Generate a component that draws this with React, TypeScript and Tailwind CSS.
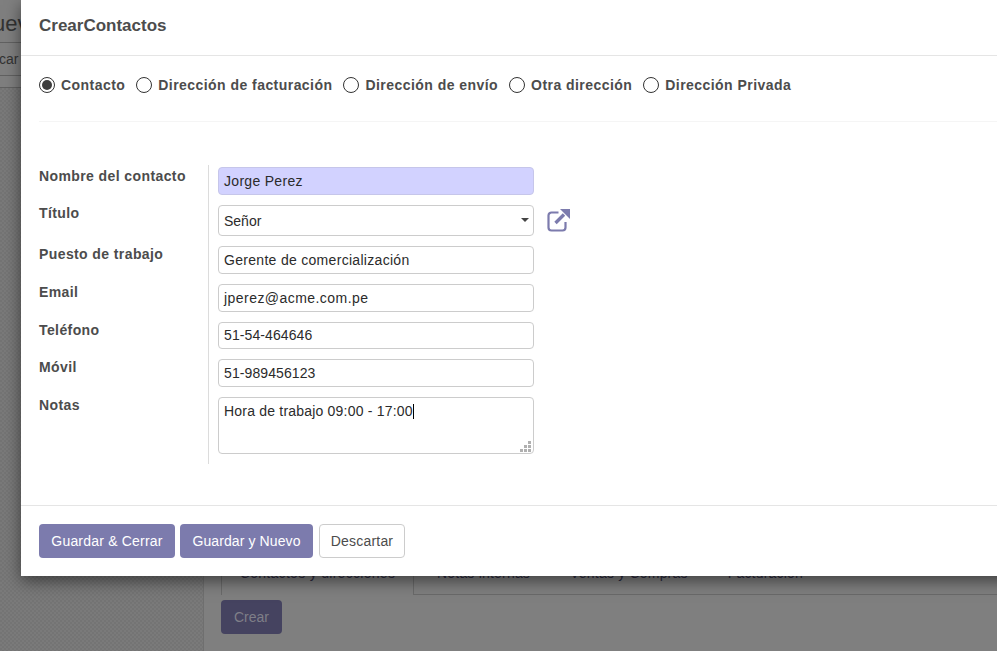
import React from "react";
import { twMerge } from "tailwind-merge";

const radios = [
  { label: "Contacto", checked: true },
  { label: "Dirección de facturación" },
  { label: "Dirección de envío" },
  { label: "Otra dirección" },
  { label: "Dirección Privada" },
];

const Radio = ({ label, checked }: { label: string; checked?: boolean }) => (
  <div className="flex items-center gap-[6px]">
    <span className="flex h-4 w-4 items-center justify-center rounded-full border border-[#333333] bg-white">
      {checked && <span className="h-[10px] w-[10px] rounded-full bg-[#3d3d3d]" />}
    </span>
    <span className="font-bold tracking-[0.45px]">{label}</span>
  </div>
);

const Row = ({ label, first, children }: { label: string; first?: boolean; children: React.ReactNode }) => (
  <div className="flex">
    <div className={`w-[169px] shrink-0 font-bold leading-[14px] tracking-[0.4px] ${first ? "pt-[4px]" : "pt-[1px]"}`}>{label}</div>
    <div className={`flex items-start border-l border-[#dcdcdc] pb-[10px] pl-[9px] ${first ? "pt-[2px]" : ""}`}>{children}</div>
  </div>
);

const Input = ({ value, className }: { value: string; className?: string }) => (
  <div className={twMerge("flex h-[28px] w-[316px] items-center rounded border border-[#cccccc] bg-white px-[5px] tracking-[0.1px] text-[#2b2b2b]", className)}>
    {value}
  </div>
);

const ExternalLink = () => (
  <svg className="ml-[13px] mt-[3px]" width="24" height="24" viewBox="0 0 24 24" fill="none">
    <path d="M11.5 4.5H4.5a3 3 0 0 0-3 3V19.5a3 3 0 0 0 3 3H15.5a3 3 0 0 0 3-3V14" stroke="#7c7bad" strokeWidth="2.2" />
    <path d="M8.5 15L17 6.5" stroke="#7c7bad" strokeWidth="3.4" />
    <path d="M13 1H23V11Z" fill="#7c7bad" />
  </svg>
);

export default function App() {
  return (
    <div className="relative h-[651px] w-[997px] overflow-hidden bg-[#7f7f7f] font-['Liberation_Sans',Arial,sans-serif] text-sm text-[#4c4c4c]">
      {/* page behind the dialog */}
      <div className="flex h-full">
        <div className="h-full w-[204px] shrink-0 border-r border-[#6f6f6f] bg-[repeating-conic-gradient(#7a7a7a_0_25%,#747474_0_50%)] bg-[length:4px_4px]">
          <div className="h-[43px] border-b border-[#616161] bg-[#7f7f7f]" />
          <div className="h-[33px] border-b border-[#616161] bg-[#7f7f7f]" />
          <div className="h-[12px] border-b border-[#616161] bg-[#7f7f7f]" />
        </div>
        <div className="flex-1 pl-[17px] pt-[560px]">
          <div className="flex h-[35px] text-[#2c2b40]">
            <div className="flex w-[193px] justify-center border-x border-[#6a6a6a] pt-[3px] tracking-[0.3px]">Contactos y direcciones</div>
            <div className="flex flex-1 gap-10 border-b border-[#6a6a6a] pl-[23px] pt-[3px] tracking-[0.2px]">
              <span>Notas internas</span>
              <span>Ventas y Compras</span>
              <span>Facturación</span>
            </div>
          </div>
          <div className="mt-[5px] flex h-[34px] w-[61px] items-center justify-center rounded bg-[#454360] text-[#7f7f88]">Crear</div>
        </div>
      </div>
      <div className="absolute left-[-7px] top-[8px] text-[22px] text-[#333333]">uev</div>
      <div className="absolute left-[-1px] top-[49px] text-[#333333]">car</div>

      {/* dialog */}
      <div className="absolute left-[21px] top-0 w-[1000px] bg-white shadow-[0_5px_15px_rgba(0,0,0,0.5)]">
        <div className="flex h-[56px] items-center border-b border-[#e5e5e5] pb-[3px] pl-[18px] text-[17px] font-bold">CrearContactos</div>
        <div className="px-[18px]">
          <div className="flex h-[66px] items-center gap-[11px] border-b border-[#f5f5f5] pb-[7px]">
            {radios.map((r) => (
              <Radio key={r.label} label={r.label} checked={r.checked} />
            ))}
          </div>
          <div className="flex flex-col pb-[41px] pt-[43px]">
            <Row label="Nombre del contacto" first>
              <Input value="Jorge Perez" className="border-[#c6c6ea] bg-[#d2d2ff] tracking-[0.3px]" />
            </Row>
            <Row label="Título">
              <div className="relative flex h-[31px] w-[316px] items-center rounded border border-[#cccccc] bg-white px-[5px] text-[#2b2b2b]">
                Señor
                <span className="absolute right-[4px] top-[12px] h-0 w-0 border-x-[4px] border-t-[4px] border-x-transparent border-t-[#444444]" />
              </div>
              <ExternalLink />
            </Row>
            <Row label="Puesto de trabajo">
              <Input value="Gerente de comercialización" className="tracking-[0.3px]" />
            </Row>
            <Row label="Email">
              <Input value="jperez@acme.com.pe" className="tracking-[0.45px]" />
            </Row>
            <Row label="Teléfono">
              <Input value="51-54-464646" className="h-[27px] pb-[1px]" />
            </Row>
            <Row label="Móvil">
              <Input value="51-989456123" />
            </Row>
            <Row label="Notas">
              <div className="relative h-[57px] w-[316px] rounded border border-[#cccccc] bg-white px-[5px] pt-[3px] tracking-[0.2px] text-[#2b2b2b]">
                Hora de trabajo 09:00 - 17:00
                <span className="ml-[0.5px] inline-block h-[15px] w-px translate-y-[3px] bg-black" />
                <svg className="absolute bottom-[1px] right-[2px]" width="11" height="11" viewBox="0 0 11 11" fill="#b0b0b0">
                  <rect x="8" y="0" width="3" height="3" />
                  <rect x="4" y="4" width="3" height="3" />
                  <rect x="8" y="4" width="3" height="3" />
                  <rect x="0" y="8" width="3" height="3" />
                  <rect x="4" y="8" width="3" height="3" />
                  <rect x="8" y="8" width="3" height="3" />
                </svg>
              </div>
            </Row>
          </div>
        </div>
        <div className="flex items-center border-t border-[#e5e5e5] p-[18px]">
          <button className="h-[34px] w-[136px] rounded bg-[#7c7bad] tracking-[0.2px] text-white">Guardar &amp; Cerrar</button>
          <button className="ml-[5px] h-[34px] w-[133px] rounded bg-[#7c7bad] tracking-[0.1px] text-white">Guardar y Nuevo</button>
          <button className="ml-[6px] h-[34px] w-[86px] rounded border border-[#cccccc] bg-white tracking-[0.2px] text-[#4c4c4c]">Descartar</button>
        </div>
      </div>
    </div>
  );
}
